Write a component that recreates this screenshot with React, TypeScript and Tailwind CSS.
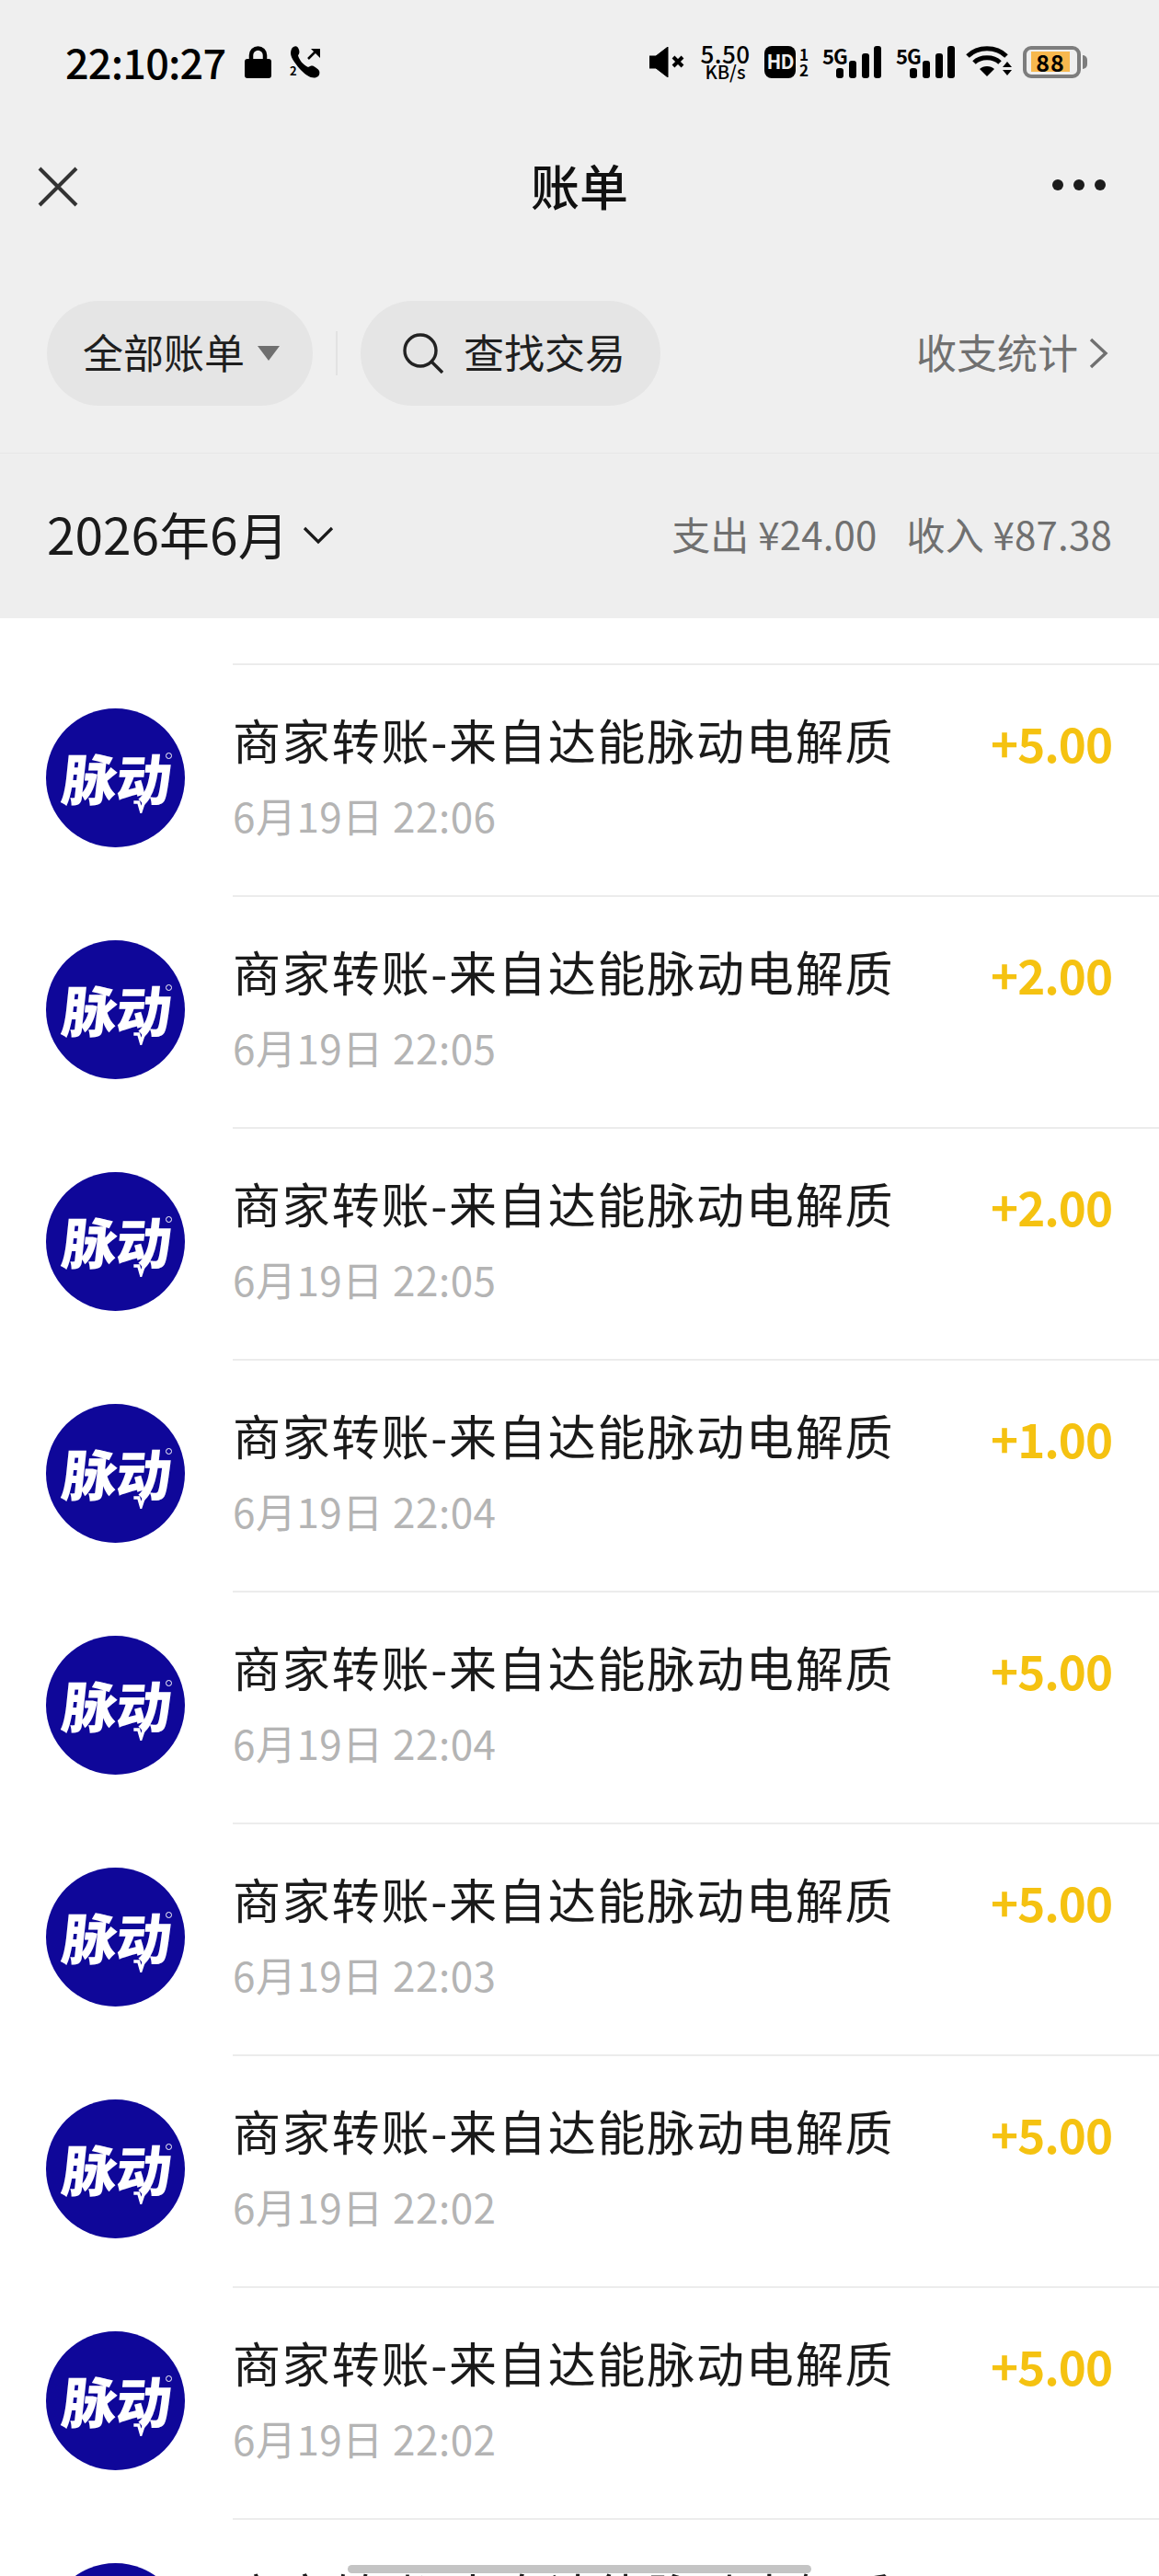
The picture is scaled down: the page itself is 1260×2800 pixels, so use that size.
import React from "react";

type Bill = { amount: string; time: string };

const bills: Bill[] = [
  { amount: "+5.00", time: "6月19日 22:06" },
  { amount: "+2.00", time: "6月19日 22:05" },
  { amount: "+2.00", time: "6月19日 22:05" },
  { amount: "+1.00", time: "6月19日 22:04" },
  { amount: "+5.00", time: "6月19日 22:04" },
  { amount: "+5.00", time: "6月19日 22:03" },
  { amount: "+5.00", time: "6月19日 22:02" },
  { amount: "+5.00", time: "6月19日 22:02" },
  { amount: "", time: "" },
];

function SignalIcon({ className }: { className?: string }) {
  return (
    <div className={`relative h-[35px] w-[64px] ${className ?? ""}`}>
      <span className="absolute left-0 top-[-2px] text-[22px] font-bold leading-[24px] tracking-[-1px] text-black">5G</span>
      <svg viewBox="0 0 50 35" className="absolute bottom-0 right-0 h-[35px] w-[50px]">
        <rect x="1" y="24" width="8" height="11" rx="3" fill="#000" />
        <rect x="15" y="16" width="8" height="19" rx="3" fill="#000" />
        <rect x="29" y="8" width="8" height="27" rx="3" fill="#000" />
        <rect x="42" y="0" width="8" height="35" rx="3" fill="#000" />
      </svg>
    </div>
  );
}

function StatusBar() {
  return (
    <div className="flex h-[36px] items-center pl-[71px] pr-[78px] text-black">
      <span className="w-[172px] text-[45px] font-medium leading-[36px] tracking-[-0.8px]">22:10:27</span>
      <svg viewBox="0 0 29 35" className="ml-[23px] h-[35px] w-[29px]">
        <path d="M7 15V10a7.5 7.5 0 0 1 15 0v5" fill="none" stroke="#000" strokeWidth="4.5" />
        <rect x="0" y="14" width="29" height="21" rx="3" fill="#000" />
      </svg>
      <div className="relative ml-[20px] h-[35px] w-[35px]">
        <svg viewBox="0 0 35 35" className="h-[35px] w-[35px]">
          <path d="M4 1c3-2 5 0 6 3s0 5-1 6c1 5 6 11 11 13 2-1 4-2 6-1s5 3 6 5c1 3 0 6-3 7-5 2-11-2-16-7S1 13 1 8c0-3 1-6 3-7z" fill="#000" />
          <path d="M20 14l9-9" fill="none" stroke="#000" strokeWidth="2.5" />
          <path d="M23 3h10v10z" fill="#000" />
        </svg>
        <span className="absolute left-0 top-[19px] text-[13px] font-bold leading-[16px]">2</span>
      </div>
      <div className="ml-auto flex h-[35px] items-center">
        <svg viewBox="0 0 39 33" className="h-[33px] w-[39px]">
          <path d="M0 10h7L20 0v33L7 23H0z" fill="#000" stroke="#000" strokeLinejoin="round" />
          <path d="M26 11l10 10M36 11L26 21" stroke="#000" strokeWidth="4" />
        </svg>
        <div className="ml-[16px] flex w-[55px] flex-col items-center">
          <span className="text-[26px] font-medium leading-[22px] tracking-[0.5px]">5.50</span>
          <span className="text-[20px] font-medium leading-[18px]">KB/s</span>
        </div>
        <div className="ml-[15px] flex h-[35px] w-[34px] items-center justify-center rounded-[8px] bg-black text-[21px] font-bold tracking-[-1px] text-[#efefef]">
          HD
        </div>
        <div className="ml-[3px] flex w-[12px] flex-col items-center text-[17px] font-bold leading-[17px]">
          <span>1</span>
          <span>2</span>
        </div>
        <SignalIcon className="ml-[14px]" />
        <SignalIcon className="ml-[16px]" />
        <svg viewBox="0 0 50 34" className="ml-[12px] h-[34px] w-[50px]">
          <path d="M2 11c11-11 31-11 42 0" fill="none" stroke="#000" strokeWidth="5" />
          <path d="M9 18c7-7 21-7 28 0" fill="none" stroke="#000" strokeWidth="5" />
          <path d="M23 33l-8-8c4-4 12-4 16 0z" fill="#000" />
          <path d="M45 17l5 6H40zM40 26h10l-5 6z" fill="#000" />
        </svg>
        <div className="ml-[12px] flex h-[35px] w-[63px] items-center rounded-[9px] border-[4px] border-[#7d7d7d] pl-[5px]">
          <div className="flex h-[22px] w-[42px] items-center justify-center bg-[#f7b84e] text-[25px] font-bold leading-[22px] tracking-[1px] text-black">
            88
          </div>
        </div>
        <div className="ml-[2px] h-[15px] w-[5px] rounded-r-full bg-[#7d7d7d]" />
      </div>
    </div>
  );
}

function Avatar() {
  return (
    <div className="relative flex h-[151px] w-[151px] shrink-0 items-center justify-center overflow-hidden rounded-full bg-[#0f0799]">
      <span className="ml-[2px] -mt-[3px] -skew-x-6 text-[60px] font-black leading-[66px] tracking-[-1px] text-white">脉动</span>
      <svg viewBox="0 0 30 30" className="absolute left-[92px] top-[94px] h-[20px] w-[24px]">
        <path d="M2 12h8l4 14 6-18" fill="none" stroke="#fff" strokeWidth="5" />
      </svg>
      <span className="absolute left-[130px] top-[48px] h-[7px] w-[7px] rounded-full border border-white" />
    </div>
  );
}

function BillRow({ bill }: { bill: Bill }) {
  return (
    <div className="flex h-[252px] pl-[50px]">
      <div className="pt-[49px]">
        <Avatar />
      </div>
      <div className="ml-[52px] flex flex-1 items-start justify-between border-t-2 border-[#ececec] pr-[51px]">
        <div className="pt-[45px]">
          <div className="text-[52px] leading-[72px] tracking-[1.8px] text-[#1a1a1a]">商家转账-来自达能脉动电解质</div>
          {bill.time && <div className="mt-[14px] text-[44px] leading-[64px] tracking-[0.5px] text-[#b4b4b4]">{bill.time}</div>}
        </div>
        {bill.amount && (
          <div className="pt-[48px] text-[51px] font-bold leading-[72px] tracking-[-1px] text-[#f5c211]">{bill.amount}</div>
        )}
      </div>
    </div>
  );
}

export default function App() {
  return (
    <div className="relative h-[2800px] w-[1260px] overflow-hidden bg-white font-['Noto_Sans_CJK_SC',sans-serif]">
      <div className="bg-[#efefef] pt-[49px]">
        <StatusBar />

        {/* Nav bar */}
        <div className="relative mt-[60px] flex h-[114px] items-center justify-center">
          <svg viewBox="0 0 44 44" className="absolute left-[41px] top-[36px] h-[44px] w-[44px]">
            <path d="M2 2l40 40M42 2L2 42" stroke="#333" strokeWidth="4" />
          </svg>
          <span className="-mt-[2px] text-[53px] font-medium leading-[72px] text-[#111]">账单</span>
          <div className="absolute left-[1144px] top-[50px] flex gap-[11px]">
            <span className="h-[12px] w-[12px] rounded-full bg-[#1c1c1c]" />
            <span className="h-[12px] w-[12px] rounded-full bg-[#1c1c1c]" />
            <span className="h-[12px] w-[12px] rounded-full bg-[#1c1c1c]" />
          </div>
        </div>

        {/* Filters */}
        <div className="mt-[68px] flex h-[114px] items-center pl-[51px] pr-[55px]">
          <div className="flex h-[114px] w-[289px] items-center rounded-full bg-[#e5e5e5] pl-[39px] text-[44px] text-[#1f1f1f]">
            <span className="-mt-[5px]">全部账单</span>
            <svg viewBox="0 0 24 16" className="ml-[14px] h-[16px] w-[24px]">
              <path d="M0 0h24L12 16z" fill="#6f6f6f" />
            </svg>
          </div>
          <div className="ml-[25px] h-[48px] w-[2px] bg-[#e2e2e2]" />
          <div className="ml-[25px] flex h-[114px] w-[326px] items-center rounded-full bg-[#e5e5e5] pl-[46px] text-[44px] text-[#1f1f1f]">
            <svg viewBox="0 0 44 44" className="h-[44px] w-[44px]">
              <circle cx="19" cy="19" r="17" fill="none" stroke="#222" strokeWidth="3.4" />
              <path d="M31 31l12 12" stroke="#222" strokeWidth="3.4" />
            </svg>
            <span className="-mt-[5px] ml-[22px]">查找交易</span>
          </div>
          <div className="ml-auto flex items-center text-[44px] text-[#707070]">
            <span className="-mt-[5px]">收支统计</span>
            <svg viewBox="0 0 21 34" className="ml-[12px] h-[34px] w-[21px]">
              <path d="M2 2l16 15L2 32" fill="none" stroke="#707070" strokeWidth="3.4" />
            </svg>
          </div>
        </div>

        {/* Month summary */}
        <div className="mt-[51px] flex h-[180px] items-center border-t border-[#e6e6e6] bg-[#eeeeee] pl-[51px] pr-[51px]">
          <span className="-mt-[8px] text-[55px] leading-[72px] text-[#1a1a1a]">2026年6月</span>
          <svg viewBox="0 0 34 20" className="ml-[15px] -mt-[2px] h-[20px] w-[34px]">
            <path d="M2 2l15 15L32 2" fill="none" stroke="#1a1a1a" strokeWidth="3.2" />
          </svg>
          <div className="-mt-[7px] ml-auto flex gap-[32px] text-[42px] tracking-[0.2px] text-[#707070]">
            <span>支出 ¥24.00</span>
            <span>收入 ¥87.38</span>
          </div>
        </div>
      </div>

      <div className="pt-[49px]">
        {bills.map((bill, i) => (
          <BillRow key={i} bill={bill} />
        ))}
      </div>

      {/* Sheet handle at the bottom edge */}
      <div className="absolute left-[378px] top-[2788px] h-[9px] w-[504px] rounded-full bg-[#c4c4c4]" />
    </div>
  );
}
